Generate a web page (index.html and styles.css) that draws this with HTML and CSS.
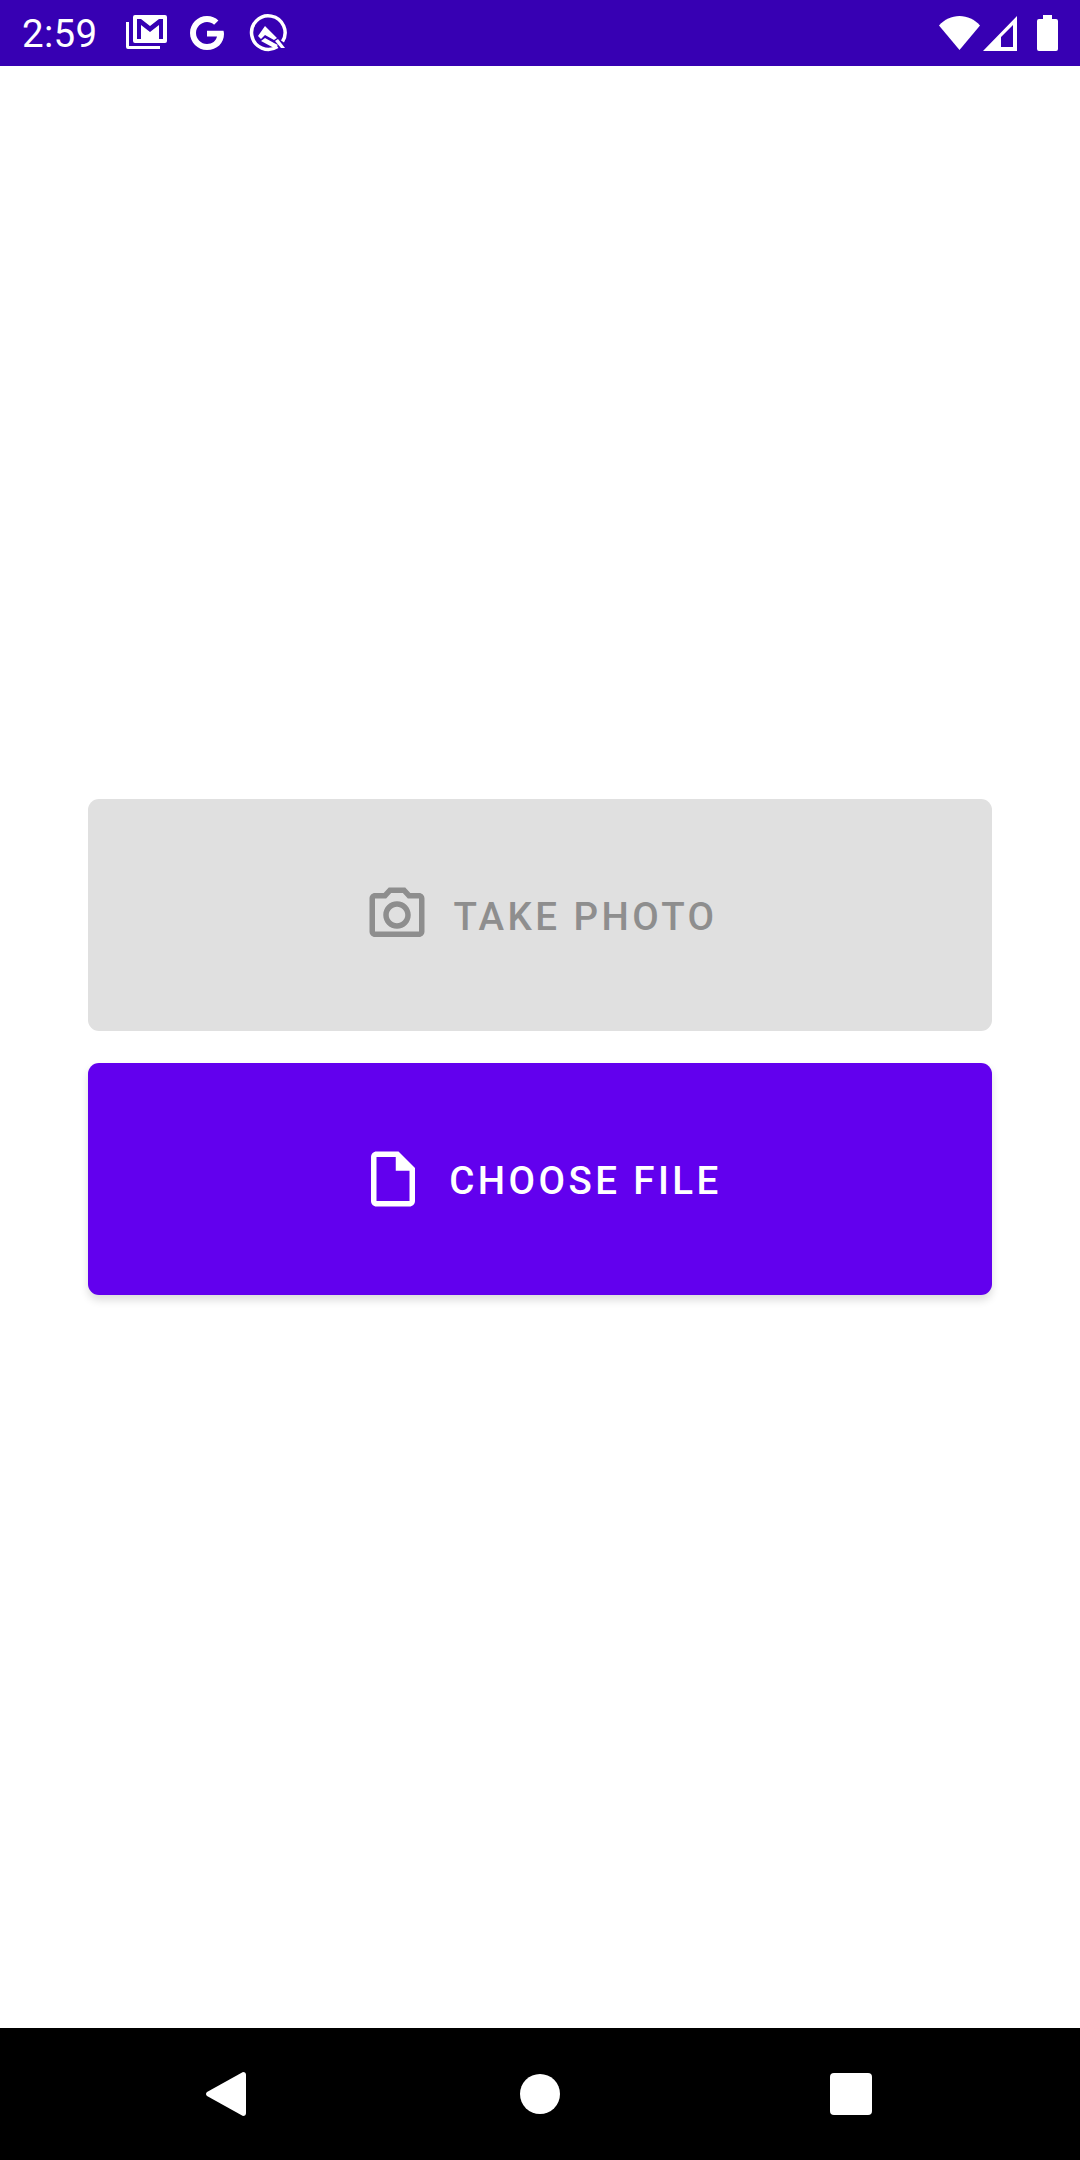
FILE: index.html

```html
<!DOCTYPE html>
<html lang="en">
<head>
  <meta charset="UTF-8" />
  <title>Upload</title>
  <link rel="stylesheet" href="styles.css">
</head>
<body>
  <div class="status-bar">
    <div class="status-left">
      <span class="time">2:59</span>
      <svg class="ic-gmail" width="42" height="36" viewBox="0 0 42 36"><path fill="#fff" d="M0 7h3v24h31v3H2q-2 0-2-2z"/><path fill="#fff" fill-rule="evenodd" d="M9 0h30q2 0 2 2v24q0 2-2 2H9q-2 0-2-2V2q0-2 2-2zM11 4v20h4V10l9 7 9-7v14h4V4h-4l-9 7-9-7z"/></svg>
      <svg class="ic-g" width="34" height="34" viewBox="0 0 34 34"><path fill="#fff" d="M17 0c4.600 0 8.500 1.700 11.400 4.400l-4.300 4.300C22.200 7 19.800 6 17 6 11 6 6 11 6 17s5 11 11 11c5.300 0 9.100-3 10-7.500H17v-5.700h16.500c.3 1.100.5 2.200.5 3.200C34 27 27 34 17 34 7.600 34 0 26.400 0 17S7.600 0 17 0z"/></svg>
      <svg class="ic-q" width="41" height="40" viewBox="0 0 41 40"><path fill="none" stroke="#fff" stroke-width="3.500" d="M29.500 33.600A16.750 16.750 0 1 1 34.500 28.500"/><path fill="#fff" d="M17 13l12 12-3 2-9-5-4 4-3-3z"/><path fill="#fff" d="M13 28l4-3 9 5 4 2-4 3z"/><path fill="#fff" d="M27 28l3-2 7 9h-4z"/></svg>
    </div>
    <div class="status-right">
      <svg width="41" height="34" viewBox="0 0 41 34"><path fill="#fff" d="M20.500 34L0 9.500C5.500 3.500 12.500 0 20.500 0S35.500 3.500 41 9.500z"/></svg>
      <svg width="34" height="35" viewBox="0 0 34 35"><path fill="#fff" fill-rule="evenodd" d="M34 0v35H0zM30 9L18 21v10h12z"/></svg>
      <svg class="ic-batt" width="21" height="36" viewBox="0 0 21 36"><path fill="#fff" d="M6 0h9v4h4q2 0 2 2v28q0 2-2 2H2q-2 0-2-2V6q0-2 2-2h4z"/></svg>
    </div>
  </div>

  <main class="content">
    <button class="btn btn-disabled" type="button" disabled>
      <svg width="66" height="66" viewBox="0 0 24 24"><path fill="currentColor" d="M20 4h-3.170L15 2H9L7.170 4H4c-1.100 0-2 .9-2 2v12c0 1.100.9 2 2 2h16c1.100 0 2-.9 2-2V6c0-1.100-.9-2-2-2zm0 14H4V6h4.050l1.830-2h4.240l1.830 2H20v12zM12 7c-2.760 0-5 2.240-5 5s2.240 5 5 5 5-2.240 5-5-2.240-5-5-5zm0 8c-1.650 0-3-1.350-3-3s1.350-3 3-3 3 1.350 3 3-1.350 3-3 3z"/></svg>
      <span class="btn-label">TAKE PHOTO</span>
    </button>
    <button class="btn btn-primary" type="button">
      <svg width="66" height="66" viewBox="0 0 24 24"><path fill="currentColor" d="M14 2H6c-1.100 0-1.990.9-1.990 2L4 20c0 1.100.89 2 1.990 2H18c1.100 0 2-.9 2-2V8l-6-6zM6 20V4h7v5h5v11H6z"/></svg>
      <span class="btn-label">CHOOSE FILE</span>
    </button>
  </main>

  <div class="nav-bar">
    <svg width="40" height="44" viewBox="0 0 40 44"><path fill="#fff" d="M37 0q3 0 3 3v38q0 3-3 3L1 24q-2-2 0-4z"/></svg>
    <div class="nav-home"></div>
    <div class="nav-recent"></div>
  </div>
</body>
</html>
```

FILE: styles.css

```css
html, body {
  margin: 0;
  padding: 0;
}
body {
  width: 1080px;
  height: 2160px;
  display: flex;
  flex-direction: column;
  background-color: #fff;
  font-family: Roboto, sans-serif;
}
.status-bar {
  height: 66px;
  flex: none;
  display: flex;
  justify-content: space-between;
  align-items: center;
  padding: 0 22px;
  background-color: #3700b3;
  color: #fff;
}
.status-left, .status-right {
  display: flex;
  align-items: center;
}
.time {
  width: 104px;
  font-size: 38.5px;
  letter-spacing: 0.3px;
  line-height: 66px;
  padding-top: 2px;
}
.ic-g {
  margin-left: 22px;
}
.ic-q {
  margin-left: 24px;
}
.status-right {
  gap: 3px;
}
.ic-batt {
  margin-left: 17px;
}
.content {
  flex: 1;
  display: flex;
  flex-direction: column;
  justify-content: center;
  gap: 32px;
  padding: 0 88px;
}
.btn {
  height: 232px;
  display: flex;
  justify-content: center;
  align-items: center;
  gap: 23px;
  border: none;
  border-radius: 11px;
  padding: 0 0 0 2px;
  font-family: Roboto, sans-serif;
  font-size: 38.5px;
  font-weight: 500;
  letter-spacing: 3.43px;
}
.btn-label {
  padding-top: 2px;
}
.btn-disabled {
  background-color: #e0e0e0;
  color: #8e8e8e;
}
.btn-primary {
  background-color: #6200ee;
  color: #fff;
  box-shadow: 0 5px 8px rgba(0, 0, 0, 0.14);
}
.nav-bar {
  height: 132px;
  flex: none;
  display: flex;
  align-items: center;
  justify-content: space-between;
  padding: 0 208px 0 206px;
  background-color: #000;
}
.nav-home {
  width: 40px;
  height: 40px;
  margin-left: 4px;
  border-radius: 50%;
  background-color: #fff;
}
.nav-recent {
  width: 42px;
  height: 42px;
  border-radius: 4px;
  background-color: #fff;
}
```
